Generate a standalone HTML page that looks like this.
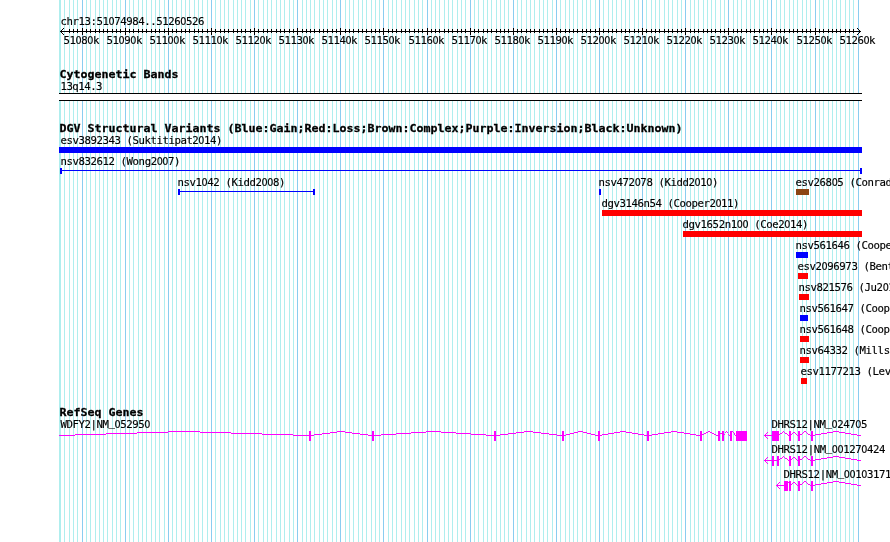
<!DOCTYPE html>
<html><head><meta charset="utf-8"><title>chr13:51074984..51260526</title>
<style>html,body{margin:0;padding:0;background:#fff}#w{position:relative;width:890px;height:542px;overflow:hidden}svg{display:block;will-change:transform}text{font-family:"DejaVu Sans Mono","Liberation Mono",monospace;font-size:10px;fill:#000;white-space:pre;stroke:#000;stroke-width:.15px}.b{font-weight:bold;font-size:11.63px;stroke-width:.3px}.z{font-family:"DejaVu Sans Condensed","DejaVu Sans","Liberation Sans",sans-serif}.g{shape-rendering:crispEdges}</style></head><body><div id="w">
<svg width="890" height="542" viewBox="0 0 890 542">
<rect width="890" height="542" fill="#fff"/>
<g class="g">
<path d="M59.5 0V542M60.5 0V542M64.5 0V542M69.5 0V542M73.5 0V542M77.5 0V542M86.5 0V542M90.5 0V542M95.5 0V542M99.5 0V542M103.5 0V542M107.5 0V542M112.5 0V542M116.5 0V542M120.5 0V542M129.5 0V542M133.5 0V542M138.5 0V542M142.5 0V542M146.5 0V542M151.5 0V542M155.5 0V542M159.5 0V542M164.5 0V542M172.5 0V542M176.5 0V542M181.5 0V542M185.5 0V542M189.5 0V542M194.5 0V542M198.5 0V542M202.5 0V542M207.5 0V542M215.5 0V542M220.5 0V542M224.5 0V542M228.5 0V542M233.5 0V542M237.5 0V542M241.5 0V542M245.5 0V542M250.5 0V542M258.5 0V542M263.5 0V542M267.5 0V542M271.5 0V542M276.5 0V542M280.5 0V542M284.5 0V542M289.5 0V542M293.5 0V542M302.5 0V542M306.5 0V542M310.5 0V542M314.5 0V542M319.5 0V542M323.5 0V542M327.5 0V542M332.5 0V542M336.5 0V542M345.5 0V542M349.5 0V542M353.5 0V542M358.5 0V542M362.5 0V542M366.5 0V542M371.5 0V542M375.5 0V542M379.5 0V542M388.5 0V542M392.5 0V542M396.5 0V542M401.5 0V542M405.5 0V542M409.5 0V542M414.5 0V542M418.5 0V542M422.5 0V542M431.5 0V542M435.5 0V542M439.5 0V542M444.5 0V542M448.5 0V542M452.5 0V542M457.5 0V542M461.5 0V542M465.5 0V542M474.5 0V542M478.5 0V542M483.5 0V542M487.5 0V542M491.5 0V542M496.5 0V542M500.5 0V542M504.5 0V542M508.5 0V542M517.5 0V542M521.5 0V542M526.5 0V542M530.5 0V542M534.5 0V542M539.5 0V542M543.5 0V542M547.5 0V542M552.5 0V542M560.5 0V542M565.5 0V542M569.5 0V542M573.5 0V542M577.5 0V542M582.5 0V542M586.5 0V542M590.5 0V542M595.5 0V542M603.5 0V542M608.5 0V542M612.5 0V542M616.5 0V542M621.5 0V542M625.5 0V542M629.5 0V542M634.5 0V542M638.5 0V542M646.5 0V542M651.5 0V542M655.5 0V542M659.5 0V542M664.5 0V542M668.5 0V542M672.5 0V542M677.5 0V542M681.5 0V542M690.5 0V542M694.5 0V542M698.5 0V542M703.5 0V542M707.5 0V542M711.5 0V542M715.5 0V542M720.5 0V542M724.5 0V542M733.5 0V542M737.5 0V542M741.5 0V542M746.5 0V542M750.5 0V542M754.5 0V542M759.5 0V542M763.5 0V542M767.5 0V542M776.5 0V542M780.5 0V542M784.5 0V542M789.5 0V542M793.5 0V542M797.5 0V542M802.5 0V542M806.5 0V542M810.5 0V542M819.5 0V542M823.5 0V542M828.5 0V542M832.5 0V542M836.5 0V542M840.5 0V542M845.5 0V542M849.5 0V542M853.5 0V542" stroke="#afeeee" stroke-width="1" fill="none"/>
<path d="M82.5 0V542M125.5 0V542M168.5 0V542M211.5 0V542M254.5 0V542M297.5 0V542M340.5 0V542M383.5 0V542M427.5 0V542M470.5 0V542M513.5 0V542M556.5 0V542M599.5 0V542M642.5 0V542M685.5 0V542M728.5 0V542M771.5 0V542M815.5 0V542M858.5 0V542" stroke="#8acdf0" stroke-width="1" fill="none"/>
</g>
<text transform="matrix(1.07 0 0 1.1 60.5 25)" textLength="134.58" lengthAdjust="spacing">chr13:51<tspan class="z">0</tspan>74984..5126<tspan class="z">0</tspan>526</text>
<g class="g" stroke="#000" stroke-width="1" fill="none">
<path d="M60 31.5H861"/>
<path d="M69.5 29V33M73.5 29V33M77.5 29V33M86.5 29V33M90.5 29V33M95.5 29V33M99.5 29V33M103.5 29V33M107.5 29V33M112.5 29V33M116.5 29V33M120.5 29V33M129.5 29V33M133.5 29V33M138.5 29V33M142.5 29V33M146.5 29V33M151.5 29V33M155.5 29V33M159.5 29V33M164.5 29V33M172.5 29V33M176.5 29V33M181.5 29V33M185.5 29V33M189.5 29V33M194.5 29V33M198.5 29V33M202.5 29V33M207.5 29V33M215.5 29V33M220.5 29V33M224.5 29V33M228.5 29V33M233.5 29V33M237.5 29V33M241.5 29V33M245.5 29V33M250.5 29V33M258.5 29V33M263.5 29V33M267.5 29V33M271.5 29V33M276.5 29V33M280.5 29V33M284.5 29V33M289.5 29V33M293.5 29V33M302.5 29V33M306.5 29V33M310.5 29V33M314.5 29V33M319.5 29V33M323.5 29V33M327.5 29V33M332.5 29V33M336.5 29V33M345.5 29V33M349.5 29V33M353.5 29V33M358.5 29V33M362.5 29V33M366.5 29V33M371.5 29V33M375.5 29V33M379.5 29V33M388.5 29V33M392.5 29V33M396.5 29V33M401.5 29V33M405.5 29V33M409.5 29V33M414.5 29V33M418.5 29V33M422.5 29V33M431.5 29V33M435.5 29V33M439.5 29V33M444.5 29V33M448.5 29V33M452.5 29V33M457.5 29V33M461.5 29V33M465.5 29V33M474.5 29V33M478.5 29V33M483.5 29V33M487.5 29V33M491.5 29V33M496.5 29V33M500.5 29V33M504.5 29V33M508.5 29V33M517.5 29V33M521.5 29V33M526.5 29V33M530.5 29V33M534.5 29V33M539.5 29V33M543.5 29V33M547.5 29V33M552.5 29V33M560.5 29V33M565.5 29V33M569.5 29V33M573.5 29V33M577.5 29V33M582.5 29V33M586.5 29V33M590.5 29V33M595.5 29V33M603.5 29V33M608.5 29V33M612.5 29V33M616.5 29V33M621.5 29V33M625.5 29V33M629.5 29V33M634.5 29V33M638.5 29V33M646.5 29V33M651.5 29V33M655.5 29V33M659.5 29V33M664.5 29V33M668.5 29V33M672.5 29V33M677.5 29V33M681.5 29V33M690.5 29V33M694.5 29V33M698.5 29V33M703.5 29V33M707.5 29V33M711.5 29V33M715.5 29V33M720.5 29V33M724.5 29V33M733.5 29V33M737.5 29V33M741.5 29V33M746.5 29V33M750.5 29V33M754.5 29V33M759.5 29V33M763.5 29V33M767.5 29V33M776.5 29V33M780.5 29V33M784.5 29V33M789.5 29V33M793.5 29V33M797.5 29V33M802.5 29V33M806.5 29V33M810.5 29V33M819.5 29V33M823.5 29V33M828.5 29V33M832.5 29V33M836.5 29V33M840.5 29V33M845.5 29V33M849.5 29V33M853.5 29V33M82.5 28V35M125.5 28V35M168.5 28V35M211.5 28V35M254.5 28V35M297.5 28V35M340.5 28V35M383.5 28V35M427.5 28V35M470.5 28V35M513.5 28V35M556.5 28V35M599.5 28V35M642.5 28V35M685.5 28V35M728.5 28V35M771.5 28V35M815.5 28V35"/>
</g>
<path class="g" d="M63 28h1v1h-1zM857 28h1v1h-1zM62 29h1v1h-1zM858 29h1v1h-1zM61 30h1v1h-1zM859 30h1v1h-1zM61 32h1v1h-1zM859 32h1v1h-1zM62 33h1v1h-1zM858 33h1v1h-1zM63 34h1v1h-1zM857 34h1v1h-1z" fill="#000"/>
<text transform="matrix(1.07 0 0 1.1 63.5 44)" textLength="33.64" lengthAdjust="spacing">51<tspan class="z">0</tspan>8<tspan class="z">0</tspan>k</text>
<text transform="matrix(1.07 0 0 1.1 106.5 44)" textLength="33.64" lengthAdjust="spacing">51<tspan class="z">0</tspan>9<tspan class="z">0</tspan>k</text>
<text transform="matrix(1.07 0 0 1.1 149.5 44)" textLength="33.64" lengthAdjust="spacing">511<tspan class="z">00</tspan>k</text>
<text transform="matrix(1.07 0 0 1.1 192.5 44)" textLength="33.64" lengthAdjust="spacing">5111<tspan class="z">0</tspan>k</text>
<text transform="matrix(1.07 0 0 1.1 235.5 44)" textLength="33.64" lengthAdjust="spacing">5112<tspan class="z">0</tspan>k</text>
<text transform="matrix(1.07 0 0 1.1 278.5 44)" textLength="33.64" lengthAdjust="spacing">5113<tspan class="z">0</tspan>k</text>
<text transform="matrix(1.07 0 0 1.1 321.5 44)" textLength="33.64" lengthAdjust="spacing">5114<tspan class="z">0</tspan>k</text>
<text transform="matrix(1.07 0 0 1.1 364.5 44)" textLength="33.64" lengthAdjust="spacing">5115<tspan class="z">0</tspan>k</text>
<text transform="matrix(1.07 0 0 1.1 408.5 44)" textLength="33.64" lengthAdjust="spacing">5116<tspan class="z">0</tspan>k</text>
<text transform="matrix(1.07 0 0 1.1 451.5 44)" textLength="33.64" lengthAdjust="spacing">5117<tspan class="z">0</tspan>k</text>
<text transform="matrix(1.07 0 0 1.1 494.5 44)" textLength="33.64" lengthAdjust="spacing">5118<tspan class="z">0</tspan>k</text>
<text transform="matrix(1.07 0 0 1.1 537.5 44)" textLength="33.64" lengthAdjust="spacing">5119<tspan class="z">0</tspan>k</text>
<text transform="matrix(1.07 0 0 1.1 580.5 44)" textLength="33.64" lengthAdjust="spacing">512<tspan class="z">00</tspan>k</text>
<text transform="matrix(1.07 0 0 1.1 623.5 44)" textLength="33.64" lengthAdjust="spacing">5121<tspan class="z">0</tspan>k</text>
<text transform="matrix(1.07 0 0 1.1 666.5 44)" textLength="33.64" lengthAdjust="spacing">5122<tspan class="z">0</tspan>k</text>
<text transform="matrix(1.07 0 0 1.1 709.5 44)" textLength="33.64" lengthAdjust="spacing">5123<tspan class="z">0</tspan>k</text>
<text transform="matrix(1.07 0 0 1.1 752.5 44)" textLength="33.64" lengthAdjust="spacing">5124<tspan class="z">0</tspan>k</text>
<text transform="matrix(1.07 0 0 1.1 796.5 44)" textLength="33.64" lengthAdjust="spacing">5125<tspan class="z">0</tspan>k</text>
<text transform="matrix(1.07 0 0 1.1 839.5 44)" textLength="33.64" lengthAdjust="spacing">5126<tspan class="z">0</tspan>k</text>
<text transform="matrix(1.0 0 0 0.945 59.5 78)" class="b" textLength="119.00" lengthAdjust="spacing">Cytogenetic Bands</text>
<text transform="matrix(1.07 0 0 1.1 60.5 90)" textLength="39.25" lengthAdjust="spacing">13q14.3</text>
<g class="g"><rect x="59" y="93" width="803" height="8" fill="#fff"/><rect x="59" y="93" width="803" height="1" fill="#000"/><rect x="59" y="100" width="803" height="1" fill="#000"/></g>
<text transform="matrix(1.0 0 0 0.945 59.5 132)" class="b" textLength="623.00" lengthAdjust="spacing">DGV Structural Variants (Blue:Gain;Red:Loss;Brown:Complex;Purple:Inversion;Black:Unknown)</text>
<text transform="matrix(1.07 0 0 1.1 60.5 144)" textLength="151.40" lengthAdjust="spacing">esv3892343 (Suktitipat2<tspan class="z">0</tspan>14)</text>
<rect class="g" x="59" y="147" width="803" height="6" fill="#0000ff"/>
<text transform="matrix(1.07 0 0 1.1 60.5 165)" textLength="112.15" lengthAdjust="spacing">nsv832612 (Wong2<tspan class="z">00</tspan>7)</text>
<g class="g" fill="#0000ff"><rect x="60" y="168" width="2" height="6"/><rect x="860" y="168" width="2" height="6"/><rect x="60" y="170" width="802" height="1"/></g>
<text transform="matrix(1.07 0 0 1.1 177.5 186)" textLength="100.93" lengthAdjust="spacing">nsv1<tspan class="z">0</tspan>42 (Kidd2<tspan class="z">00</tspan>8)</text>
<g class="g" fill="#0000ff"><rect x="178" y="189" width="2" height="6"/><rect x="313" y="189" width="2" height="6"/><rect x="178" y="191" width="137" height="1"/></g>
<text transform="matrix(1.07 0 0 1.1 598.5 186)" textLength="112.15" lengthAdjust="spacing">nsv472<tspan class="z">0</tspan>78 (Kidd2<tspan class="z">0</tspan>1<tspan class="z">0</tspan>)</text>
<rect class="g" x="599" y="189" width="2" height="6" fill="#0000ff"/>
<text transform="matrix(1.07 0 0 1.1 795.5 186)" textLength="117.76" lengthAdjust="spacing">esv268<tspan class="z">0</tspan>5 (Conrad2<tspan class="z">00</tspan>9)</text>
<rect class="g" x="796" y="189" width="13" height="6" fill="#8b4513"/>
<text transform="matrix(1.07 0 0 1.1 601.5 207)" textLength="128.97" lengthAdjust="spacing">dgv3146n54 (Cooper2<tspan class="z">0</tspan>11)</text>
<rect class="g" x="602" y="210" width="260" height="6" fill="#ff0000"/>
<text transform="matrix(1.07 0 0 1.1 682.5 228)" textLength="117.76" lengthAdjust="spacing">dgv1652n1<tspan class="z">00</tspan> (Coe2<tspan class="z">0</tspan>14)</text>
<rect class="g" x="683" y="231" width="179" height="6" fill="#ff0000"/>
<text transform="matrix(1.07 0 0 1.1 795.5 249)" textLength="123.36" lengthAdjust="spacing">nsv561646 (Cooper2<tspan class="z">0</tspan>11)</text>
<rect class="g" x="796" y="252" width="12" height="6" fill="#0000ff"/>
<text transform="matrix(1.07 0 0 1.1 797.5 270)" textLength="134.58" lengthAdjust="spacing">esv2<tspan class="z">0</tspan>96973 (Bentley2<tspan class="z">00</tspan>8)</text>
<rect class="g" x="798" y="273" width="10" height="6" fill="#ff0000"/>
<text transform="matrix(1.07 0 0 1.1 798.5 291)" textLength="100.93" lengthAdjust="spacing">nsv821576 (Ju2<tspan class="z">0</tspan>1<tspan class="z">0</tspan>)</text>
<rect class="g" x="799" y="294" width="10" height="6" fill="#ff0000"/>
<text transform="matrix(1.07 0 0 1.1 799.5 312)" textLength="123.36" lengthAdjust="spacing">nsv561647 (Cooper2<tspan class="z">0</tspan>11)</text>
<rect class="g" x="800" y="315" width="8" height="6" fill="#0000ff"/>
<text transform="matrix(1.07 0 0 1.1 799.5 333)" textLength="123.36" lengthAdjust="spacing">nsv561648 (Cooper2<tspan class="z">0</tspan>11)</text>
<rect class="g" x="800" y="336" width="9" height="6" fill="#ff0000"/>
<text transform="matrix(1.07 0 0 1.1 799.5 354)" textLength="112.15" lengthAdjust="spacing">nsv64332 (Mills2<tspan class="z">00</tspan>6)</text>
<rect class="g" x="800" y="357" width="9" height="6" fill="#ff0000"/>
<text transform="matrix(1.07 0 0 1.1 800.5 375)" textLength="117.76" lengthAdjust="spacing">esv1177213 (Levy2<tspan class="z">00</tspan>7)</text>
<rect class="g" x="801" y="378" width="6" height="6" fill="#ff0000"/>
<text transform="matrix(1.0 0 0 0.945 59.5 416)" class="b" textLength="84.00" lengthAdjust="spacing">RefSeq Genes</text>
<text transform="matrix(1.07 0 0 1.1 60.5 428)" textLength="84.11" lengthAdjust="spacing">WDFY2|NM<tspan dy="-1.7">_</tspan><tspan dy="1.7"><tspan class="z">0</tspan>5295<tspan class="z">0</tspan></tspan></text>
<path class="g" d="M168 431h32v1h-32zM337 431h8v1h-8zM426 431h15v1h-15zM524 431h9v1h-9zM578 431h5v1h-5zM620 431h6v1h-6zM671 431h6v1h-6zM708 431h2v1h-2zM726 431h1v1h-1zM732 431h1v1h-1zM137 432h31v1h-31zM200 432h31v1h-31zM330 432h7v1h-7zM345 432h7v1h-7zM411 432h15v1h-15zM441 432h15v1h-15zM516 432h8v1h-8zM533 432h8v1h-8zM574 432h4v1h-4zM583 432h4v1h-4zM614 432h6v1h-6zM626 432h6v1h-6zM664 432h7v1h-7zM677 432h7v1h-7zM706 432h2v1h-2zM710 432h2v1h-2zM725 432h1v1h-1zM727 432h1v1h-1zM733 432h1v1h-1zM106 433h31v1h-31zM231 433h31v1h-31zM322 433h8v1h-8zM352 433h8v1h-8zM396 433h15v1h-15zM456 433h15v1h-15zM508 433h8v1h-8zM541 433h8v1h-8zM570 433h4v1h-4zM587 433h4v1h-4zM608 433h6v1h-6zM632 433h6v1h-6zM658 433h6v1h-6zM684 433h6v1h-6zM704 433h2v1h-2zM712 433h2v1h-2zM720 433h2v1h-2zM734 433h1v1h-1zM75 434h31v1h-31zM262 434h31v1h-31zM314 434h8v1h-8zM360 434h8v1h-8zM381 434h15v1h-15zM471 434h15v1h-15zM500 434h8v1h-8zM549 434h8v1h-8zM566 434h4v1h-4zM591 434h4v1h-4zM602 434h6v1h-6zM638 434h6v1h-6zM652 434h6v1h-6zM690 434h6v1h-6zM702 434h2v1h-2zM714 434h2v1h-2zM724 434h1v1h-1zM728 434h1v1h-1zM734 434h1v1h-1zM59 435h16v1h-16zM293 435h16v1h-16zM310 435h4v1h-4zM368 435h4v1h-4zM373 435h8v1h-8zM486 435h8v1h-8zM495 435h5v1h-5zM557 435h5v1h-5zM563 435h3v1h-3zM595 435h3v1h-3zM599 435h3v1h-3zM644 435h3v1h-3zM648 435h4v1h-4zM696 435h4v1h-4zM701 435h1v1h-1zM716 435h2v1h-2zM723 435h1v1h-1zM729 435h1v1h-1zM735 435h1v1h-1z" fill="#ff00ff"/>
<g class="g" fill="#ff00ff">
<rect x="309" y="431" width="2" height="10"/>
<rect x="372" y="431" width="2" height="10"/>
<rect x="494" y="431" width="2" height="10"/>
<rect x="562" y="431" width="2" height="10"/>
<rect x="598" y="431" width="2" height="10"/>
<rect x="647" y="431" width="2" height="10"/>
<rect x="700" y="431" width="2" height="10"/>
<rect x="718" y="431" width="2" height="10"/>
<rect x="722" y="431" width="2" height="10"/>
<rect x="730" y="431" width="2" height="10"/>
<rect x="736" y="431" width="11" height="10"/>
</g>
<text transform="matrix(1.07 0 0 1.1 771.5 428)" textLength="89.72" lengthAdjust="spacing">DHRS12|NM<tspan dy="-1.7">_</tspan><tspan dy="1.7"><tspan class="z">0</tspan>247<tspan class="z">0</tspan>5</tspan></text>
<path class="g" d="M783 431h1v1h-1zM804 431h2v1h-2zM833 431h6v1h-6zM767 432h1v1h-1zM782 432h1v1h-1zM784 432h1v1h-1zM793 432h2v1h-2zM803 432h1v1h-1zM806 432h1v1h-1zM827 432h6v1h-6zM839 432h6v1h-6zM766 433h1v1h-1zM780 433h2v1h-2zM785 433h2v1h-2zM792 433h1v1h-1zM795 433h1v1h-1zM802 433h1v1h-1zM807 433h1v1h-1zM821 433h6v1h-6zM845 433h6v1h-6zM765 434h1v1h-1zM779 434h1v1h-1zM787 434h1v1h-1zM791 434h1v1h-1zM796 434h1v1h-1zM800 434h2v1h-2zM808 434h2v1h-2zM815 434h6v1h-6zM851 434h6v1h-6zM764 435h8v1h-8zM778 435h1v1h-1zM788 435h1v1h-1zM790 435h1v1h-1zM797 435h1v1h-1zM799 435h1v1h-1zM810 435h1v1h-1zM812 435h3v1h-3zM857 435h4v1h-4zM765 436h1v1h-1zM766 437h1v1h-1zM767 438h1v1h-1z" fill="#ff00ff"/>
<g class="g" fill="#ff00ff">
<rect x="772" y="431" width="7" height="10"/>
<rect x="789" y="431" width="2" height="10"/>
<rect x="798" y="431" width="2" height="10"/>
<rect x="811" y="431" width="2" height="10"/>
</g>
<text transform="matrix(1.07 0 0 1.1 771.5 453)" textLength="106.54" lengthAdjust="spacing">DHRS12|NM<tspan dy="-1.7">_</tspan><tspan dy="1.7"><tspan class="z">00</tspan>127<tspan class="z">0</tspan>424</tspan></text>
<path class="g" d="M783 456h1v1h-1zM804 456h2v1h-2zM833 456h6v1h-6zM767 457h1v1h-1zM782 457h1v1h-1zM784 457h1v1h-1zM793 457h2v1h-2zM803 457h1v1h-1zM806 457h1v1h-1zM827 457h6v1h-6zM839 457h6v1h-6zM766 458h1v1h-1zM780 458h2v1h-2zM785 458h2v1h-2zM792 458h1v1h-1zM795 458h1v1h-1zM802 458h1v1h-1zM807 458h1v1h-1zM821 458h6v1h-6zM845 458h6v1h-6zM765 459h1v1h-1zM779 459h1v1h-1zM787 459h1v1h-1zM791 459h1v1h-1zM796 459h1v1h-1zM800 459h2v1h-2zM808 459h2v1h-2zM815 459h6v1h-6zM851 459h6v1h-6zM764 460h8v1h-8zM774 460h3v1h-3zM778 460h1v1h-1zM788 460h1v1h-1zM790 460h1v1h-1zM797 460h1v1h-1zM799 460h1v1h-1zM810 460h1v1h-1zM812 460h3v1h-3zM857 460h4v1h-4zM765 461h1v1h-1zM766 462h1v1h-1zM767 463h1v1h-1z" fill="#ff00ff"/>
<g class="g" fill="#ff00ff">
<rect x="772" y="456" width="2" height="10"/>
<rect x="777" y="456" width="2" height="10"/>
<rect x="789" y="456" width="2" height="10"/>
<rect x="798" y="456" width="2" height="10"/>
<rect x="811" y="456" width="2" height="10"/>
</g>
<text transform="matrix(1.07 0 0 1.1 783.5 478)" textLength="106.54" lengthAdjust="spacing">DHRS12|NM<tspan dy="-1.7">_</tspan><tspan dy="1.7"><tspan class="z">00</tspan>1<tspan class="z">0</tspan>31719</tspan></text>
<path class="g" d="M804 481h2v1h-2zM833 481h6v1h-6zM779 482h1v1h-1zM788 482h1v1h-1zM793 482h2v1h-2zM803 482h1v1h-1zM806 482h1v1h-1zM827 482h6v1h-6zM839 482h6v1h-6zM778 483h1v1h-1zM792 483h1v1h-1zM795 483h1v1h-1zM802 483h1v1h-1zM807 483h1v1h-1zM821 483h6v1h-6zM845 483h6v1h-6zM777 484h1v1h-1zM791 484h1v1h-1zM796 484h1v1h-1zM800 484h2v1h-2zM808 484h2v1h-2zM815 484h6v1h-6zM851 484h6v1h-6zM776 485h8v1h-8zM790 485h1v1h-1zM797 485h1v1h-1zM799 485h1v1h-1zM810 485h1v1h-1zM812 485h3v1h-3zM857 485h4v1h-4zM777 486h1v1h-1zM778 487h1v1h-1zM779 488h1v1h-1z" fill="#ff00ff"/>
<g class="g" fill="#ff00ff">
<rect x="784" y="481" width="4" height="10"/>
<rect x="789" y="481" width="2" height="10"/>
<rect x="798" y="481" width="2" height="10"/>
<rect x="811" y="481" width="2" height="10"/>
</g>
</svg></div></body></html>
